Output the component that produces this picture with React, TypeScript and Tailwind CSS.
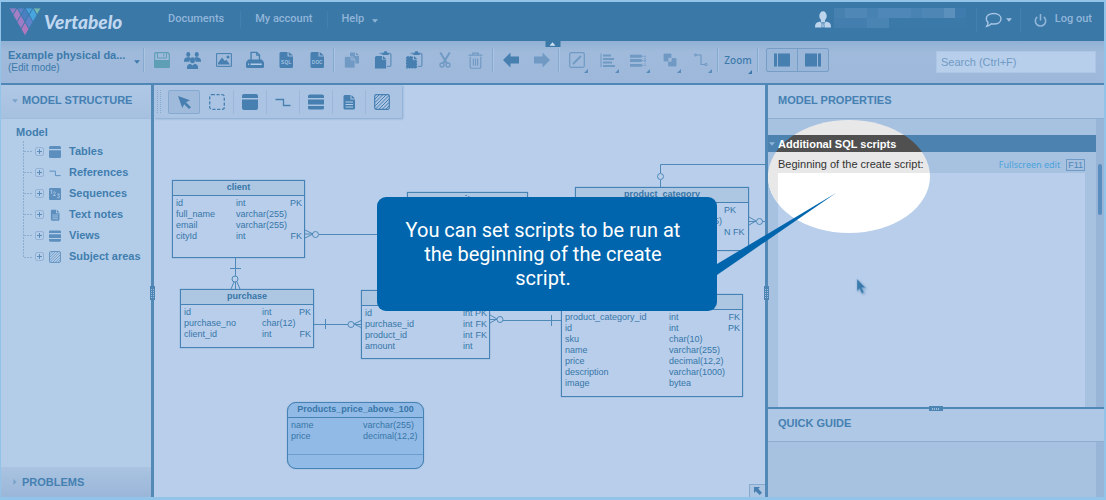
import type { ReactNode } from 'react'

type Row = [name: string, type: string, key?: string]

interface EntityProps {
  name: string
  rows: Row[]
  className: string
  typeCol: string
  keyCol?: string
}

const TREE = [
  { label: 'Tables', icon: <TableIcon size={12} /> },
  { label: 'References', icon: <ReferenceIcon size={12} /> },
  { label: 'Sequences', icon: <SequenceIcon /> },
  { label: 'Text notes', icon: <NoteIcon size={12} /> },
  { label: 'Views', icon: <ViewIcon size={12} /> },
  { label: 'Subject areas', icon: <AreaIcon size={12} /> },
]

function Svg({ size = 16, children }: { size?: number; children: ReactNode }) {
  return (
    <svg
      width={size}
      height={size}
      viewBox="0 0 16 16"
      fill="none"
      stroke="currentColor"
      aria-hidden="true"
      className="shrink-0"
    >
      {children}
    </svg>
  )
}

function TableIcon({ size }: { size?: number }) {
  return (
    <Svg size={size}>
      <path d="M0 4V2Q0 0 2 0H14Q16 0 16 2V4Z" fill="currentColor" stroke="none" />
      <path d="M0 5.5H16V14Q16 16 14 16H2Q0 16 0 14Z" fill="currentColor" stroke="none" />
    </Svg>
  )
}

function ViewIcon({ size }: { size?: number }) {
  return (
    <Svg size={size}>
      <path
        d="M0 4V2Q0 .5 2 .5H14Q16 .5 16 2V4ZM0 5.5H16V10.5H0ZM0 12H16V14Q16 15.5 14 15.5H2Q0 15.5 0 14Z"
        fill="currentColor"
        stroke="none"
      />
    </Svg>
  )
}

function ReferenceIcon({ size }: { size?: number }) {
  return (
    <Svg size={size}>
      <path d="M.5 5.5H8.5V11.5H15.5" strokeWidth="1.3" />
    </Svg>
  )
}

function SequenceIcon() {
  return (
    <Svg size={12}>
      <rect width="16" height="16" rx="1.5" fill="currentColor" stroke="none" />
      <path
        d="M2 4L3.5 2.5V8M5.5 6Q7.5 4 8.5 6Q8.5 7 5.8 10H9M11 8H14L12.3 10Q14.5 10.5 13.8 12.5Q12 14 10.8 12.5"
        stroke="#b3cde9"
      />
    </Svg>
  )
}

function NoteIcon({ size }: { size?: number }) {
  return (
    <Svg size={size}>
      <path
        d="M4 1H9.5V5.5H14V14Q14 15.5 12.5 15.5H4Q2.5 15.5 2.5 14V2.5Q2.5 1 4 1ZM10.5 1L14 4.5H10.5Z"
        fill="currentColor"
        stroke="none"
      />
      <path d="M4.5 8H12M4.5 10.5H12M4.5 13H12" stroke="#b3cde9" />
    </Svg>
  )
}

function AreaIcon({ size }: { size?: number }) {
  return (
    <Svg size={size}>
      <rect x=".7" y=".7" width="14.6" height="14.6" rx="1.5" strokeWidth="1.2" />
      <path d="M1 5L5 1M1 8.5L8.5 1M1 12L12 1M1.5 15L15 1.5M5 15L15 5M8.5 15L15 8.5M12 15L15 12" />
    </Svg>
  )
}

function FileIcon({ label }: { label: string }) {
  return (
    <Svg>
      <path
        d="M3 0H9.5V4.5H15V14.5Q15 16 13.5 16H3Q1.5 16 1.5 14.5V1.5Q1.5 0 3 0ZM10.7 0L15 3.5H10.7Z"
        fill="currentColor"
        stroke="none"
      />
      <text
        x="8.2"
        y="12"
        textAnchor="middle"
        fill="#b3cde9"
        stroke="none"
        className="font-['Liberation_Mono'] text-[6px]"
      >
        {label}
      </text>
    </Svg>
  )
}

function SaveIcon() {
  return (
    <Svg>
      <path
        d="M1.5.7H14L15.3 2V14.3Q15.3 15.3 14.3 15.3H1.7Q.7 15.3 .7 14.3V1.5Q.7.7 1.5.7Z"
        strokeWidth="1.2"
      />
      <path d="M.7 8.5H15.3V15.3H.7Z" fill="currentColor" />
      <path d="M3.5 1V6H12.5V1M9.8 2V4.5" />
    </Svg>
  )
}

function UsersIcon() {
  return (
    <Svg size={17}>
      <g fill="currentColor" stroke="none">
        <ellipse cx="4" cy="2.3" rx="1.9" ry="2.3" />
        <ellipse cx="12" cy="2.3" rx="1.9" ry="2.3" />
        <path d="M0 8.5Q0 5.5 3 5H5.5L6.3 6Q4.8 7.2 5.2 9.2H0Z" />
        <path d="M16 8.5Q16 5.5 13 5H10.5L9.7 6Q11.2 7.2 10.8 9.2H16Z" />
        <ellipse cx="8" cy="7.7" rx="2.3" ry="2.8" />
        <path d="M2.8 16V14.5Q2.8 11.6 6 11L8 12.6L10 11Q13.2 11.6 13.2 14.5V16Z" />
      </g>
    </Svg>
  )
}

function ImageIcon() {
  return (
    <Svg>
      <path d="M.6 1.6H15.4V14.4H.6Z" />
      <path d="M2 12.5V11L6 5.5L8.8 9L10.3 7.8L14 12.5Z" fill="currentColor" stroke="none" />
      <circle cx="12" cy="5" r="1.5" fill="currentColor" stroke="none" />
    </Svg>
  )
}

function PrintIcon() {
  return (
    <Svg size={18}>
      <path d="M4.5 8V1.2H9.5L12 3.5V8" strokeWidth="1.2" />
      <path d="M9.5 1.2V3.8H12" />
      <path
        d="M2 7.5H14L16 10V14Q16 15 15 15H1Q0 15 0 14V10Z"
        fill="currentColor"
        stroke="none"
      />
      <path d="M4 11.8H14M1.8 11.8H2.6" stroke="#b3cde9" strokeWidth="1.2" />
    </Svg>
  )
}

function CopyIcon() {
  return (
    <Svg>
      <path d="M6 .5H11V4H15V11.5H6ZM12 .5L15 3.3H12Z" fill="currentColor" stroke="none" />
      <path
        d="M2 4.5H7V8H11V16H2Q.5 16 .5 14.5V6Q.5 4.5 2 4.5ZM8 4.5L11 7.3H8Z"
        fill="currentColor"
        stroke="#9fbadb"
        strokeWidth=".7"
      />
    </Svg>
  )
}

function PasteIcon({ dashed = false }: { dashed?: boolean }) {
  return (
    <Svg size={18}>
      <path
        d="M5 2.2H14Q15 2.2 15 3.2V12.5Q15 13.6 14 13.6H11.5"
        stroke="#6592bf"
        strokeWidth="1.2"
      />
      <path d="M7.5 1.5H9V.3H11.5V1.5H13V3.5H7.5Z" fill="currentColor" stroke="none" />
      <path
        d="M2 5H6.8V8.2H10.3V15.2H1.3V5.8Z"
        fill="currentColor"
        strokeWidth=".9"
        strokeDasharray={dashed ? '1.3 1.1' : undefined}
      />
      <path d="M8 4.5L11 7.3H8Z" fill="currentColor" stroke="none" />
    </Svg>
  )
}

function CutIcon() {
  return (
    <Svg>
      <path d="M3.3 .5L9.8 11.3M12.7 .5L6.2 11.3" strokeWidth="2" />
      <circle cx="5" cy="13" r="2" strokeWidth="1.4" />
      <circle cx="11" cy="13" r="2" strokeWidth="1.4" />
    </Svg>
  )
}

function TrashIcon() {
  return (
    <Svg size={17}>
      <path
        d="M1.5 3H14.5M5.5 3V1H10.5V3M3 4.5V14Q3 15.3 4.3 15.3H11.7Q13 15.3 13 14V4.5M6 6V13M8 6V13M10 6V13"
        strokeWidth="1.1"
      />
    </Svg>
  )
}

function ArrowIcon({ right = false }: { right?: boolean }) {
  return (
    <Svg>
      <path
        d={right ? 'M16 8L8.5.5V4.5H0V11.5H8.5V15.5Z' : 'M0 8L7.5.5V4.5H16V11.5H7.5V15.5Z'}
        fill="currentColor"
        stroke="none"
      />
    </Svg>
  )
}

function PointerIcon({ size }: { size?: number }) {
  return (
    <Svg size={size}>
      <path
        d="M2 2L14 6.3L10 8.3L15 13.2L13 15L8.2 10.2L6.3 14Z"
        fill="currentColor"
        stroke="none"
      />
    </Svg>
  )
}

function Caret({ className = '' }: { className?: string }) {
  return (
    <svg width="7" height="4" viewBox="0 0 7 4" className={className} aria-hidden="true">
      <path d="M0 0H7L3.5 4Z" fill="currentColor" />
    </svg>
  )
}

function Logo() {
  const halves = ['#8f7fc6', '#5a84cc', '#47a2de', '#72b7b0']
  const diamonds = [
    [8, 0, '#a57fc4'],
    [16, 0, '#4a7fc2'],
    [24, 0, '#48a5df'],
    [12, 7, '#9e7cc6'],
    [20, 7, '#5f83ca'],
    [16, 14, '#ad78be'],
  ] as const
  return (
    <svg
      width="32"
      height="28"
      viewBox="0 0 32 28"
      stroke="#3a78a8"
      strokeWidth=".8"
      aria-hidden="true"
    >
      {halves.map((fill, i) => (
        <path key={fill} d={`M${i * 8} 0h8l-4 7Z`} fill={fill} />
      ))}
      {diamonds.map(([x, y, fill]) => (
        <path key={fill} d={`M${x} ${y}l4 7l-4 7l-4-7Z`} fill={fill} />
      ))}
    </svg>
  )
}

function ToolButton({
  label,
  children,
  disabled = false,
  menu = false,
}: {
  label: string
  children: ReactNode
  disabled?: boolean
  menu?: boolean
}) {
  return (
    <button
      type="button"
      aria-label={label}
      disabled={disabled}
      className="relative flex h-6 w-[31px] shrink-0 items-center justify-center text-[#467fb0] disabled:text-[#7099c3]"
    >
      {children}
      {menu && (
        <svg
          width="4"
          height="4"
          viewBox="0 0 4 4"
          className="absolute right-1 -bottom-px text-[#5a8cbb]"
        >
          <path d="M4 0V4H0Z" fill="currentColor" />
        </svg>
      )}
    </button>
  )
}

function Separator() {
  return <span className="mx-px h-6 w-0.5 shrink-0 border-l border-[#86a9ce] bg-[#aac3e1]" />
}

function Header() {
  return (
    <header className="relative flex h-[39px] shrink-0 items-center bg-[#3a78a8] pr-3 pl-2 font-['Roboto',sans-serif] text-[11px] font-medium text-[#91b5d8]">
      <Logo />
      <span className="ml-[3px] w-[96px] font-['Lato',sans-serif] text-[19px] leading-6 font-black text-[#c0d7f0] italic">
        Vertabelo
      </span>
      <nav className="flex h-8 items-center pb-1">
        <a href="#documents" className="pr-4 pl-7">
          Documents
        </a>
        <a href="#account" className="border-l border-[#4480ae] px-3.5">
          My account
        </a>
        <button type="button" className="flex items-center gap-2 border-l border-[#4480ae] px-3.5">
          Help
          <Caret className="mt-0.5 w-1.5" />
        </button>
      </nav>
      <div className="ml-auto flex h-8 items-center pb-1">
        <svg width="16" height="17" viewBox="0 0 16 17" fill="#bdd4ed" aria-hidden="true">
          <ellipse cx="8" cy="5" rx="3.7" ry="4.7" />
          <path d="M6 8H10V11L8 13L6 11Z" />
          <path d="M5 10.5L8 14L11 10.5L14 11.5Q16 12.5 16 16.5H0Q0 12.5 2 11.5Z" />
          <path d="M7.3 11.5H8.7L9.3 16.5H6.7Z" stroke="#3a78a8" strokeWidth=".7" />
        </svg>
        <div className="mr-[10px] ml-[3px] w-[132px] pb-1" aria-hidden="true">
          <div className="flex h-[10px]">
            <span className="flex-1 bg-[#4681b0]" />
            <span className="flex-2 bg-[#4f88b7]" />
            <span className="flex-1 bg-[#4882b2]" />
            <span className="flex-3 bg-[#4f88b8]" />
            <span className="flex-1 bg-[#4983b4]" />
            <span className="flex-2 bg-[#4e87b6]" />
            <span className="flex-1 bg-[#5b90bd]" />
            <span className="flex-1 bg-[#3f7bac]" />
          </div>
          <div className="flex h-[10px]">
            <span className="flex-3 bg-[#437eae]" />
            <span className="flex-2 bg-[#4a84b3]" />
            <span className="flex-7 bg-[#3b79a9]" />
          </div>
        </div>
        <button
          type="button"
          aria-label="Feedback"
          className="flex h-6 items-center gap-1 border-l border-[#4480ae] px-2 text-[#a6c5e4]"
        >
          <svg width="17" height="16" viewBox="0 0 17 16" fill="none" stroke="currentColor">
            <path
              d="M8.8 1.5C13 1.5 16 3.6 16 6.8S13 12 8.8 12Q7.5 12 6.3 11.7Q4.5 13.7 1.8 14.2Q3 12.5 3 10.4Q1.3 9 1.3 6.8C1.3 3.6 4.5 1.5 8.8 1.5Z"
              strokeWidth="1.4"
            />
          </svg>
          <Caret className="w-1.5" />
        </button>
        <button
          type="button"
          className="flex h-6 items-center gap-2 border-l border-[#4480ae] pl-[13px]"
        >
          <svg
            width="13"
            height="14"
            viewBox="0 0 13 14"
            fill="none"
            stroke="currentColor"
            strokeWidth="1.6"
            className="mt-0.5"
          >
            <path d="M3.2 2.8A5.2 5.2 0 1 0 9.8 2.8M6.5 0V6.5" />
          </svg>
          Log out
        </button>
      </div>
      <button
        type="button"
        aria-label="Collapse header"
        className="absolute top-full left-1/2 z-10 flex h-1.5 w-[15px] -translate-x-1/2 items-center justify-center bg-[#3a78a8] text-[#d1e2f5]"
      >
        <Caret className="w-1.5 rotate-180" />
      </button>
    </header>
  )
}

function Toolbar() {
  return (
    <div className="flex h-11 shrink-0 items-start border-b-2 border-[#4f88b6] bg-linear-to-b from-[#91b0d3] via-[#9fbadb] via-25% to-[#9db8da] pr-2">
      <button
        type="button"
        className="mt-2 flex w-[139px] items-center gap-1 pl-[7px] text-left text-[#3d7aab]"
      >
        <span className="w-[123px]">
          <span className="block truncate text-[11px] leading-[13px] font-bold">
            Example physical da...
          </span>
          <span className="block text-[10px] leading-3">(Edit mode)</span>
        </span>
        <Caret className="w-1.5 shrink-0" />
      </button>
      <div className="mt-[5px] ml-0.5 flex items-center">
        <Separator />
        <div className="flex">
          <button
            type="button"
            aria-label="Save"
            className="flex h-6 w-[31px] items-center justify-center text-[#5f9fb5]"
          >
            <SaveIcon />
          </button>
          <ToolButton label="Share">
            <UsersIcon />
          </ToolButton>
          <ToolButton label="Export as image">
            <ImageIcon />
          </ToolButton>
          <ToolButton label="Print">
            <PrintIcon />
          </ToolButton>
          <ToolButton label="Generate SQL script">
            <FileIcon label="SQL" />
          </ToolButton>
          <ToolButton label="Generate documentation">
            <FileIcon label="DOC" />
          </ToolButton>
        </div>
        <Separator />
        <ToolButton label="Copy" disabled>
          <CopyIcon />
        </ToolButton>
        <ToolButton label="Paste">
          <PasteIcon />
        </ToolButton>
        <ToolButton label="Paste special">
          <PasteIcon dashed />
        </ToolButton>
        <ToolButton label="Cut" disabled>
          <CutIcon />
        </ToolButton>
        <ToolButton label="Delete" disabled>
          <TrashIcon />
        </ToolButton>
        <Separator />
        <ToolButton label="Undo">
          <ArrowIcon />
        </ToolButton>
        <ToolButton label="Redo" disabled>
          <ArrowIcon right />
        </ToolButton>
        <Separator />
        <ToolButton label="Line style" disabled menu>
          <Svg>
            <rect x=".7" y=".7" width="14.6" height="14.6" rx="1.5" strokeWidth="1.2" />
            <path d="M4 12L12 4" strokeWidth="1.8" />
          </Svg>
        </ToolButton>
        <ToolButton label="Align" disabled menu>
          <Svg>
            <path d="M1 1.5V15" />
            <path d="M3 3.5H11M3 7H14M3 10.5H12M3 14H15" strokeWidth="2.2" />
          </Svg>
        </ToolButton>
        <ToolButton label="Same size" disabled menu>
          <Svg size={17}>
            <path d="M0 4H11M0 8H11M0 12.5H11" strokeWidth="2.6" />
            <path d="M11 4H15.5M11 8H15.5M11 12.5H15.5M14 5.5V11" strokeDasharray="1.5 1" />
          </Svg>
        </ToolButton>
        <ToolButton label="Order" disabled menu>
          <Svg>
            <path
              d="M2 2H9V5.5H6V9H2ZM10 6.5H14V14H6.5V10H10Z"
              fill="currentColor"
              strokeWidth=".8"
            />
          </Svg>
        </ToolButton>
        <ToolButton label="Route" disabled menu>
          <Svg>
            <path d="M2 3H8V12.5H12.5" strokeWidth="1.2" />
            <circle cx="2.5" cy="3" r="1" />
            <circle cx="13" cy="12.5" r="1.2" />
          </Svg>
        </ToolButton>
        <Separator />
        <button
          type="button"
          className="relative flex h-7 w-9 items-center justify-center font-['Noto_Sans',sans-serif] text-[10px] font-medium text-[#3d7aab]"
        >
          Zoom
          <svg width="4" height="4" viewBox="0 0 4 4" className="absolute right-1 -bottom-0">
            <path d="M4 0V4H0Z" fill="currentColor" />
          </svg>
        </button>
        <Separator />
        <div className="ml-1.5 flex h-6 w-[63px] divide-x divide-[#759dc6] rounded-xs border border-[#759dc6] bg-[#9ab7d9] text-[#467fb0]">
          <button
            type="button"
            aria-label="Toggle left panel"
            className="flex flex-1 items-center justify-center"
          >
            <Svg>
              <path d="M0 1.5H3V14.5H0ZM4 1.5H16V14.5H4Z" fill="currentColor" stroke="none" />
            </Svg>
          </button>
          <button
            type="button"
            aria-label="Toggle right panel"
            className="flex flex-1 items-center justify-center"
          >
            <Svg>
              <path d="M13 1.5H16V14.5H13ZM0 1.5H12V14.5H0Z" fill="currentColor" stroke="none" />
            </Svg>
          </button>
        </div>
      </div>
      <input
        type="search"
        aria-label="Search"
        placeholder="Search (Ctrl+F)"
        className="mt-[10px] ml-auto h-[22px] w-40 border border-[#adc6e5] bg-[#b8cfec] px-1 text-[11px] text-[#3d7aab] outline-none placeholder:text-[#6f9ac4]"
      />
    </div>
  )
}

function PanelTitle({ children, className }: { children: ReactNode; className: string }) {
  return (
    <h2
      className={`flex shrink-0 items-center text-[11px] leading-4 font-bold text-[#4580b2] ${className}`}
    >
      {children}
    </h2>
  )
}

function StructurePanel() {
  return (
    <aside className="flex w-[150px] shrink-0 flex-col bg-[#b3cde9]">
      <PanelTitle className="h-[34px] gap-1 border-b border-[#9fbcdc] bg-linear-to-b from-[#afc8e6] to-[#a6c0df] pb-1 pl-[11px]">
        <Caret className="mt-0.5 w-1.5 text-[#7ba2c9]" />
        MODEL STRUCTURE
      </PanelTitle>
      <div className="flex-1 pt-1 text-[11px] leading-[21px] font-bold text-[#417dae]">
        <p className="pl-[15px] leading-[18px]">Model</p>
        <div className="relative">
          <svg
            width="10"
            height="117"
            viewBox="0 0 10 117"
            className="absolute top-0 left-[22px]"
            fill="none"
            stroke="#8dadd0"
            strokeDasharray="2 1"
          >
            <path d="M.5 0V116.5M1 10.5H10M1 31.5H10M1 52.5H10M1 73.5H10M1 94.5H10M1 116.5H10" />
          </svg>
          <ul>
            {TREE.map(({ label, icon }) => (
              <li key={label} className="flex h-[21px] items-center pl-[34px]">
                <button
                  type="button"
                  aria-label={`Expand ${label}`}
                  className="mr-[5px] flex size-[9px] items-center justify-center rounded-xs border border-[#94b3d7] text-[#5b8dbc]"
                >
                  <svg width="5" height="5" viewBox="0 0 5 5" stroke="currentColor">
                    <path d="M0 2.5H5M2.5 0V5" />
                  </svg>
                </button>
                <span className="mr-2 text-[#5d8fbe]">{icon}</span>
                {label}
              </li>
            ))}
          </ul>
        </div>
      </div>
      <PanelTitle className="h-[30px] gap-1 bg-linear-to-b from-[#a9c3e1] to-[#9ab6d8] pl-[11px]">
        <Caret className="w-1.5 -rotate-90 text-[#7ba2c9]" />
        PROBLEMS
      </PanelTitle>
    </aside>
  )
}

function Entity({ name, rows, className, typeCol, keyCol = 'text-right' }: EntityProps) {
  return (
    <section
      className={`absolute overflow-hidden border border-[#4682b3] text-[9px] leading-[11px] text-[#3776a8] shadow-[0_0_1px_#5c91bf] ${className}`}
    >
      <h3 className="h-[15px] border-b border-[#4682b3] bg-[#adc6e2] pt-px text-center font-bold">
        {name}
      </h3>
      <table className="mt-0.5 w-full table-fixed">
        <tbody>
          {rows.map(([column, type, key], i) => (
            <tr key={i} className="h-[11px]">
              <td className={`p-0 pl-[3px] ${typeCol}`}>{column}</td>
              <td className="p-0 whitespace-nowrap">{type}</td>
              {key !== undefined && <td className={`w-6 p-0 pr-0.5 ${keyCol}`}>{key}</td>}
            </tr>
          ))}
        </tbody>
      </table>
    </section>
  )
}

function Connections() {
  return (
    <svg
      width="612"
      height="412"
      viewBox="154 85 612 412"
      fill="none"
      stroke="#4f89b8"
      className="absolute top-0 left-0"
      aria-hidden="true"
    >
      {/* client - city */}
      <path d="M305 230L313 234L305 238M305 234H313M319 234.5H408" />
      <circle cx="315.5" cy="234.5" r="3" />
      {/* client - purchase */}
      <path d="M235.5 258V276M230 268.5H241M235.5 282V289M234 282L231 289M237 282L240 289" />
      <circle cx="235" cy="279" r="3" />
      {/* purchase - purchase_item */}
      <path d="M314 324.5H348M325.5 319V329M354 324L362 320M354 324L362 328M354 324.5H362" />
      <circle cx="351" cy="324.5" r="3" />
      {/* purchase_item - product */}
      <path d="M490 315L497 319L490 323M490 319.5H497M503 320.5H562M551.5 315V326" />
      <circle cx="500" cy="319.5" r="3" />
      {/* product_category parent */}
      <path d="M660.5 187V180M660.5 173V164.5H766M749 217L756 221L749 225M749 221.5H756M762 221.5H766" />
      <circle cx="660.5" cy="176.5" r="3" />
      <circle cx="759.5" cy="221.5" r="3" />
    </svg>
  )
}

function CanvasTools() {
  const tools = [
    { label: 'New table', icon: <TableIcon /> },
    { label: 'New reference', icon: <ReferenceIcon /> },
    { label: 'New view', icon: <ViewIcon /> },
    { label: 'New text note', icon: <NoteIcon /> },
    { label: 'New subject area', icon: <AreaIcon /> },
  ]
  return (
    <div className="absolute top-0 left-0 flex h-[33px] items-center bg-[#abc4e3] pr-1 text-[#467fb0] shadow-[1px_1px_2px_#86a9ce]">
      <svg width="5" height="24" viewBox="0 0 5 24" className="mr-1 ml-[3px]" aria-hidden="true">
        <path d="M.5 0V24M3.5 0V24" stroke="#87a9cd" strokeDasharray="1 1" />
      </svg>
      <button
        type="button"
        aria-label="Select"
        className="ml-0.5 flex h-6 w-8 items-center justify-center rounded-xs border border-[#86a9cf] bg-[#9fbadb]"
      >
        <PointerIcon />
      </button>
      <button
        type="button"
        aria-label="Area select"
        className="flex h-6 w-[33px] items-center justify-center"
      >
        <Svg>
          <rect
            x=".7"
            y=".7"
            width="14.6"
            height="14.6"
            rx="2"
            strokeWidth="1.3"
            strokeDasharray="3.2 1.6"
          />
        </Svg>
      </button>
      {tools.map(({ label, icon }) => (
        <button
          key={label}
          type="button"
          aria-label={label}
          className="flex h-6 w-[33px] items-center justify-center border-l border-[#9bb7d9]"
        >
          {icon}
        </button>
      ))}
    </div>
  )
}

function Diagram() {
  return (
    <main className="relative flex-1 overflow-hidden bg-[#b8ceeb]">
      <Connections />
      <Entity
        name="client"
        className="top-[95px] left-[18px] h-[78px] w-[133px]"
        typeCol="w-[63px]"
        rows={[
          ['id', 'int', 'PK'],
          ['full_name', 'varchar(255)', ''],
          ['email', 'varchar(255)', ''],
          ['cityId', 'int', 'FK'],
        ]}
      />
      <Entity
        name="purchase"
        className="top-[204px] left-[26px] h-[59px] w-[134px]"
        typeCol="w-[81px]"
        rows={[
          ['id', 'int', 'PK'],
          ['purchase_no', 'char(12)', ''],
          ['client_id', 'int', 'FK'],
        ]}
      />
      <Entity
        name="purchase_item"
        className="top-[205px] left-[207px] h-[69px] w-[129px]"
        typeCol="w-[101px]"
        keyCol="w-[16px] text-right"
        rows={[
          ['id', 'int', 'PK'],
          ['purchase_id', 'int', 'FK'],
          ['product_id', 'int', 'FK'],
          ['amount', 'int', ''],
        ]}
      />
      <Entity
        name="city"
        className="top-[107px] left-[253px] h-[60px] w-[121px]"
        typeCol="w-[60px]"
        rows={[]}
      />
      <Entity
        name="product_category"
        className="top-[102px] left-[421px] h-[64px] w-[174px]"
        typeCol="w-[95px]"
        keyCol="text-left"
        rows={[
          ['', '', 'PK'],
          ['', 'varchar(255)', ''],
          ['', '', 'N FK'],
        ]}
      />
      <Entity
        name="product"
        className="top-[209px] left-[407px] h-[103px] w-[182px]"
        typeCol="w-[107px]"
        rows={[
          ['product_category_id', 'int', 'FK'],
          ['id', 'int', 'PK'],
          ['sku', 'char(10)', ''],
          ['name', 'varchar(255)', ''],
          ['price', 'decimal(12,2)', ''],
          ['description', 'varchar(1000)', ''],
          ['image', 'bytea', ''],
        ]}
      />
      <Entity
        name="Products_price_above_100"
        className="top-[317px] left-[133px] h-[67px] w-[137px] rounded-[9px] bg-[#92bae6] bg-linear-to-b from-transparent from-[51px] via-[#4682b3] via-[51px] to-transparent to-[52px] [&_h3]:bg-transparent"
        typeCol="w-[75px]"
        rows={[
          ['name', 'varchar(255)'],
          ['price', 'decimal(12,2)'],
        ]}
      />
      <CanvasTools />
      <button
        type="button"
        aria-label="Show navigator"
        className="absolute right-0 bottom-0 flex h-[13px] w-4 items-center justify-center border-t border-l border-[#86a9ce] bg-[#abc5e3] text-[#467fb0]"
      >
        <svg width="8" height="8" viewBox="0 0 8 8">
          <path d="M0 0H6L4.3 1.7L8 5.7L5.7 8L1.8 4.2L0 6Z" fill="currentColor" />
        </svg>
      </button>
    </main>
  )
}

function Splitter() {
  return (
    <div className="relative w-[3px] shrink-0 bg-[#5389b7]">
      <span className="absolute top-[201px] -left-px z-10 flex h-[14px] w-[5px] items-center justify-center bg-[#4c84b3]">
        <svg width="3" height="9" viewBox="0 0 3 9" stroke="#9fbcdb" aria-hidden="true">
          <path d="M.5 0V9M2.5 0V9" strokeDasharray="1 1" />
        </svg>
      </span>
    </div>
  )
}

function PropertiesPanel() {
  return (
    <aside className="flex w-[336px] shrink-0 flex-col bg-[#a7c1e0]">
      <PanelTitle className="h-[34px] border-b border-[#8dadd1] bg-[#afc8e5] pb-1 pl-[10px]">
        MODEL PROPERTIES
      </PanelTitle>
      <div className="relative flex min-h-0 flex-1">
        <div className="flex flex-1 flex-col pt-4">
          <h3 className="flex h-[17px] items-center gap-[3px] bg-[#4b82b0] pl-px text-[11px] leading-4 font-bold text-white">
            <Caret className="w-1.5 text-[#8fb4da]" />
            <span className="z-10">Additional SQL scripts</span>
          </h3>
          <div className="flex h-[21px] items-center justify-between pt-1 pr-[11px] pl-[10px] text-[11px]">
            <label htmlFor="create-script" className="z-10 text-[#333]">
              Beginning of the create script:
            </label>
            <button
              type="button"
              className="flex items-center gap-1.5 font-['Noto_Sans',sans-serif] text-[9px] text-[#4ba3dc]"
            >
              Fullscreen edit
              <kbd className="border border-[#6f9ac6] px-px font-['Liberation_Sans',sans-serif] text-[9px] leading-[10px] text-[#4e87b8]">
                F11
              </kbd>
            </button>
          </div>
          <textarea
            id="create-script"
            className="mr-[11px] ml-[10px] flex-1 resize-none bg-[#b8ceeb] outline-none"
          />
        </div>
        <div className="flex w-2 flex-col items-center bg-[#98b4d6] pt-[45px]">
          <span className="h-[51px] w-1 rounded-full bg-[#598dc0]" />
        </div>
        {/* highlighted part of the panel */}
        <div className="pointer-events-none absolute top-px left-0 h-[113px] w-[162px] overflow-hidden rounded-[50%]">
          <div className="h-[15px] bg-[#e8e8e8]" />
          <div className="h-[17px] bg-[#505050]" />
          <div className="h-[21px] bg-[#e8e8e8]" />
          <div className="h-[60px] border-l-10 border-[#e8e8e8] bg-white" />
        </div>
        <svg
          width="12"
          height="17"
          viewBox="0 0 12 17"
          className="absolute top-[160px] left-[88px] drop-shadow-[1px_1px_1px_#7fa4cb]"
          aria-hidden="true"
        >
          <path
            d="M1 0V12L3.5 9.7L5.8 14.5L8 13.4L5.8 8.8H9.5Z"
            fill="#3a7aaa"
            stroke="#8fb2d8"
            strokeWidth=".5"
          />
        </svg>
      </div>
      <div className="relative h-0.5 shrink-0 bg-[#4f87b6]">
        <span className="absolute -top-px left-1/2 flex h-[5px] w-[14px] -translate-x-1/2 items-center justify-center bg-[#4c84b3]">
          <svg width="8" height="2" viewBox="0 0 8 2" stroke="#9fbcdb" aria-hidden="true">
            <path d="M0 1H8" strokeWidth="2" strokeDasharray="1 1" />
          </svg>
        </span>
      </div>
      <PanelTitle className="h-[33px] border-b border-[#8dadd1] bg-[#afc8e5] pb-1 pl-[10px]">
        QUICK GUIDE
      </PanelTitle>
      <div className="h-[55px] shrink-0 border-r-8 border-[#98b4d6]" />
    </aside>
  )
}

function Callout() {
  return (
    <div
      role="tooltip"
      className="absolute top-[195px] left-[376px] z-20 w-[340px] rounded-[9px] bg-[#0065ad] py-[21px] pr-8 pl-6 text-center font-['Roboto',sans-serif] text-xl leading-6 text-white"
    >
      You can set scripts to be run at the beginning of the create script.
      <svg
        width="120"
        height="84"
        viewBox="0 0 120 84"
        className="absolute -top-1 left-full"
        aria-hidden="true"
      >
        <path d="M0 71L119 0L0 82Z" fill="#0065ad" />
      </svg>
    </div>
  )
}

export default function App() {
  return (
    <div className="relative flex h-screen w-full flex-col overflow-hidden border-t-2 border-r-2 border-b-3 border-l border-[#92c4e9] font-['Liberation_Sans',Arial,sans-serif]">
      <Header />
      <Toolbar />
      <div className="flex min-h-0 flex-1">
        <StructurePanel />
        <Splitter />
        <Diagram />
        <Splitter />
        <PropertiesPanel />
      </div>
      <Callout />
    </div>
  )
}
